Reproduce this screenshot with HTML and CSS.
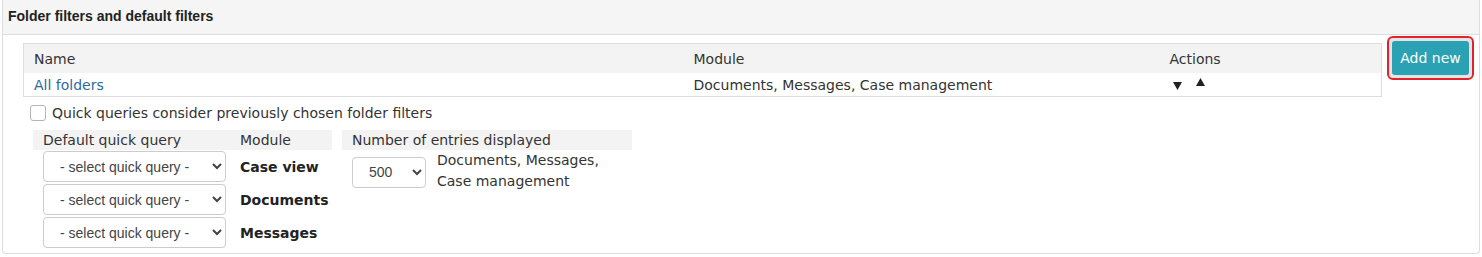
FILE: index.html
```html
<!DOCTYPE html>
<html>
<head>
<meta charset="utf-8">
<link rel="stylesheet" href="styles.css">
</head>
<body>
<div class="panel">
  <div class="panel-heading">Folder filters and default filters</div>
  <div class="panel-body">
    <div class="top-row">
      <table class="filters">
        <colgroup><col class="c-name"><col class="c-module"><col class="c-actions"></colgroup>
        <thead>
          <tr><th>Name</th><th>Module</th><th>Actions</th></tr>
        </thead>
        <tbody>
          <tr>
            <td><a class="link" href="#">All folders</a></td>
            <td>Documents, Messages, Case management</td>
            <td class="acts"><svg class="arrow down" width="9" height="8" viewBox="0 0 9 8"><path d="M0 0H9L4.5 8Z" fill="#222"/></svg><svg class="arrow up" width="9" height="8" viewBox="0 0 9 8"><path d="M0 8H9L4.5 0Z" fill="#222"/></svg></td>
          </tr>
        </tbody>
      </table>
      <div class="btn-wrap"><button class="btn-add">Add new</button></div>
    </div>
    <label class="check-row"><input type="checkbox" class="check"><span>Quick queries consider previously chosen folder filters</span></label>
    <div class="defaults">
      <table class="qq">
        <thead><tr><th class="qq-sel">Default quick query</th><th class="qq-mod">Module</th></tr></thead>
        <tbody>
          <tr><td class="sel-cell"><select class="sel sel-qq"><option>- select quick query -</option></select></td><td class="mod">Case view</td></tr>
          <tr><td class="sel-cell"><select class="sel sel-qq"><option>- select quick query -</option></select></td><td class="mod">Documents</td></tr>
          <tr><td class="sel-cell"><select class="sel sel-qq"><option>- select quick query -</option></select></td><td class="mod">Messages</td></tr>
        </tbody>
      </table>
      <table class="num">
        <colgroup><col class="c-numsel"><col class="c-numtxt"></colgroup>
        <thead><tr><th colspan="2">Number of entries displayed</th></tr></thead>
        <tbody>
          <tr><td class="num-sel"><select class="sel sel-num"><option>500</option></select></td><td class="num-txt">Documents, Messages,<br>Case management</td></tr>
        </tbody>
      </table>
    </div>
  </div>
</div>
</body>
</html>
```

FILE: styles.css
```css
* { box-sizing: border-box; }
body {
  margin: 0;
  background: #fff;
  font-family: "DejaVu Sans", Verdana, sans-serif;
  font-size: 14px;
  color: #333;
}
.panel {
  margin-left: 2px;
  width: 1478px;
  height: 254px;
  border: 1px solid #ddd;
  border-top: none;
  border-radius: 0 0 4px 4px;
}
.panel-heading {
  height: 35px;
  background: #f5f5f5;
  border-bottom: 1px solid #ddd;
  padding: 0 5px 2px;
  display: flex;
  align-items: center;
  font-family: "Liberation Sans", Arial, sans-serif;
  font-weight: bold;
  font-size: 14px;
  color: #222;
}
.panel-body {
  padding: 8px 0 0 20px;
}
.top-row {
  display: flex;
  align-items: flex-start;
}
.filters {
  width: 1359px;
  border-collapse: collapse;
  border: 1px solid #ddd;
  table-layout: fixed;
}
.c-name { width: 660px; }
.c-module { width: 476px; }
.filters th {
  background: #f3f3f3;
  font-weight: normal;
  text-align: left;
  height: 29px;
  padding: 1px 10px 0;
  color: #333;
}
.filters td {
  height: 24px;
  padding: 1px 10px 0;
  vertical-align: middle;
}
.link { color: #2d6a9f; text-decoration: none; }
.acts { line-height: 0; }
.arrow { display: inline-block; vertical-align: top; }
.arrow.down { margin-left: 3px; margin-top: 2px; }
.arrow.up { margin-left: 14px; margin-top: -2px; }
.btn-wrap {
  margin: -7px 0 0 5px;
  border: 2px solid #e5222a;
  border-radius: 6px;
  background: #e4e4e4;
  padding: 3px;
}
.btn-add {
  display: block;
  width: 77px;
  height: 34px;
  border: none;
  border-radius: 3px;
  background: #2ba2b3;
  color: #fff;
  font-family: "DejaVu Sans", Verdana, sans-serif;
  font-size: 14px;
  padding: 0;
}
.check-row {
  display: flex;
  align-items: center;
  margin: 7px 0 0 7px;
  height: 17px;
}
.check {
  appearance: none;
  -webkit-appearance: none;
  width: 16px;
  height: 16px;
  margin: 0 6px 0 0;
  border: 1.5px solid #b5b5b5;
  border-radius: 3px;
  background: #fff;
}
.defaults {
  display: flex;
  align-items: flex-start;
  gap: 10px;
  margin: 9px 0 0 10px;
}
.qq, .num {
  border-collapse: separate;
  border-spacing: 0;
}
.num { table-layout: fixed; width: 290px; }
.c-numsel { width: 84px; }
.c-numtxt { width: 206px; }
.qq th, .num th {
  background: #f3f3f3;
  font-weight: normal;
  text-align: left;
  height: 20px;
  padding: 0 10px;
  color: #333;
}
.qq-sel { width: 207px; }
.qq-mod { width: 92px; padding-left: 0 !important; }
.qq td { height: 33px; }
.qq td.sel-cell { padding: 1px 14px 1px 10px; }
.qq td.mod { padding: 0; font-weight: bold; color: #222; }
.sel {
  font-family: "Liberation Sans", Arial, sans-serif;
  font-size: 14px;
  color: #444;
  height: 31px;
  border: 1px solid #ccc;
  border-radius: 4px;
  background: #fff;
  padding: 0 8px 0 12px;
  display: block;
}
.sel-qq { width: 183px; }
.sel-num { width: 74px; }
.num-sel { padding: 2px 0 0 10px; vertical-align: middle; }
.num-txt { padding: 0 0 0 11px; line-height: 21px; vertical-align: top; }
```
